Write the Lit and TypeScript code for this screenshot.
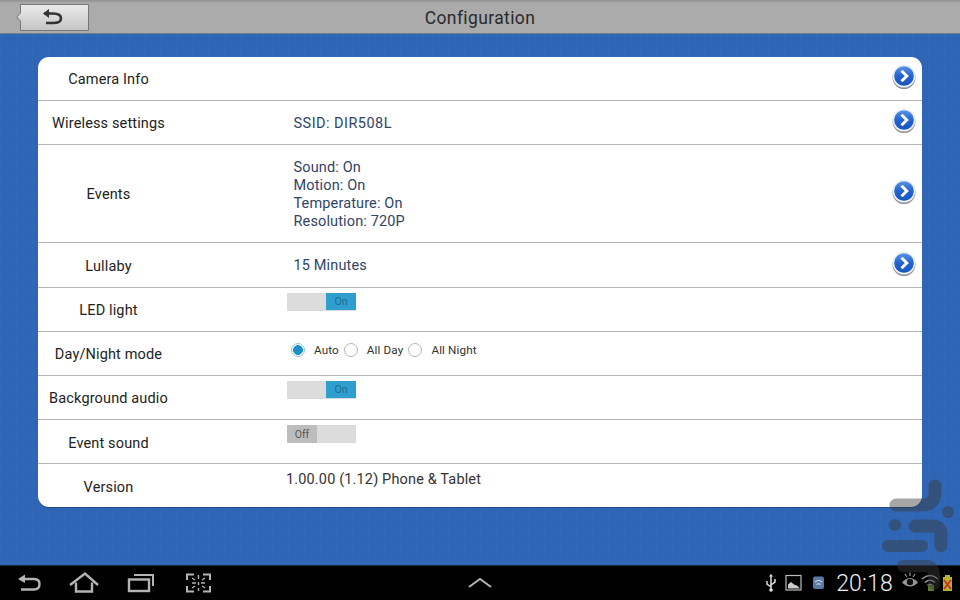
import { LitElement, html, css, svg } from "lit";
import { customElement } from "lit/decorators.js";

const arrow = html`<svg class="go" width="26" height="28" viewBox="0 0 26 28">
  <defs>
    <linearGradient id="gb" x1="0" y1="0" x2="0" y2="1"><stop offset="0" stop-color="#5c93e6"/><stop offset="0.5" stop-color="#2263cf"/><stop offset="1" stop-color="#1a55bd"/></linearGradient>
  </defs>
  <circle cx="13" cy="14.5" r="11.5" fill="#8a8f96"/>
  <circle cx="13" cy="13" r="11.5" fill="#e8eef5"/>
  <circle cx="13" cy="13" r="9.8" fill="url(#gb)"/>
  <path d="M10.5 7.8 L15.8 13 L10.5 18.2" fill="none" stroke="#fff" stroke-width="3"/>
</svg>`;

const toggle = (on: boolean) => html`<div class="toggle ${on ? "on" : "off"}"><span class="knob">${on ? "On" : "Off"}</span></div>`;

const radio = (checked: boolean, label: string) => html`<span class="radio ${checked ? "checked" : ""}"></span><span class="rlabel">${label}</span>`;

@customElement("app-root")
export class AppRoot extends LitElement {
  static styles = css`
    :host { display: block; width: 960px; height: 600px; position: relative; overflow: hidden; font-family: Roboto, "Liberation Sans", sans-serif; color: #222; }
    .page { width: 960px; height: 600px; display: flex; flex-direction: column; }
    .top { height: 34px; flex: none; box-sizing: border-box; padding-top: 2px; position: relative; background: linear-gradient(#8f8f8f 0, #aaaaaa 3px, #acacac 100%); border-bottom: 1px solid #6d7b8c; display: flex; align-items: center; justify-content: center; font-size: 17.5px; letter-spacing: 0.38px; color: #2a2a2a; }
    .back { position: absolute; left: 16px; top: 4px; width: 74px; height: 27px; display: flex; }
    .main { flex: 1; min-height: 0; box-sizing: border-box; padding: 23px 38px 0; background-color: #2f65b5; background-image: linear-gradient(rgba(255,255,255,.018) 1px, transparent 1px), linear-gradient(90deg, rgba(255,255,255,.018) 1px, transparent 1px); background-size: 16px 16px; }
    .card { height: 450px; background: #fff; border-radius: 11px; display: flex; flex-direction: column; overflow: hidden; box-shadow: 0 1px 0 #23497f; }
    .row { display: grid; grid-template-columns: 141px 1fr 44px; box-sizing: border-box; border-bottom: 1px solid #b5b5b5; flex: none; position: relative; font-size: 14.5px; letter-spacing: 0.14px; }
    .row:last-child { border-bottom: none; flex: 1; }
    .label { display: flex; align-items: center; justify-content: center; white-space: nowrap; padding-top: 2px; }
    .label.low { padding-top: 4px; }
    .val { display: flex; flex-direction: column; justify-content: center; padding: 2px 0 0 114.5px; color: #2f4468; line-height: 18px; }
    .ssid { letter-spacing: 0.46px; }
    .end { display: flex; align-items: flex-start; padding-left: 13px; }
    .t6 { padding-top: 6px; }
    .t7 { padding-top: 7px; }
    .t33 { padding-top: 33px; }
    .val.toggles { justify-content: flex-start; padding: 5px 0 0 108px; }
    .toggle { width: 69px; height: 18px; background: #dcdcdc; display: flex; font-size: 10.5px; letter-spacing: 0; }
    .toggle.on { justify-content: flex-end; }
    .knob { height: 17px; padding-top: 1px; box-sizing: border-box; display: flex; align-items: center; justify-content: center; }
    .on .knob { width: 30px; background: #2f9fd0; color: #1e6a8e; }
    .off .knob { width: 30px; background: #bdbdbd; color: #555; height: 18px; padding-top: 2px; }
    .val.radios { flex-direction: row; align-items: center; justify-content: flex-start; padding: 0 0 7px 112px; font-size: 11.7px; letter-spacing: 0.12px; color: #333; }
    .radio { width: 14px; height: 14px; border-radius: 50%; box-sizing: border-box; border: 1px solid #b4b4b4; background: #fff; flex: none; position: relative; }
    .radio.checked { border-color: #8fc6e0; background: radial-gradient(circle, #1b8fc6 0 4.6px, #fff 5.2px); }
    .rlabel { margin: 0 5px 0 9px; white-space: nowrap; }
    .val.ver { justify-content: flex-start; padding: 7px 0 0 107px; color: #333; line-height: 17px; letter-spacing: 0.15px; }
    .nav { height: 35px; flex: none; box-sizing: border-box; background: #000; border-top: 1px solid #1a2940; display: flex; align-items: center; position: relative; }
    .navicons { display: flex; align-items: center; gap: 0; }
    .nav svg { display: block; }
    .spacer { flex: 1; }
    .status { display: flex; align-items: center; height: 100%; }
    .clock { color: #eee; font-size: 23px; letter-spacing: 0.2px; margin: 0 7px 0 2px; font-weight: 300; }
    .up { position: absolute; left: 468px; top: 11px; }
    .wm { position: absolute; right: 0; top: 470px; pointer-events: none; }
  `;

  render() {
    return html`<div class="page">
      <div class="top">
        <div class="back">
          <svg width="74" height="27" viewBox="0 0 74 27">
            <defs><linearGradient id="bk" x1="0" y1="0" x2="0" y2="1"><stop offset="0" stop-color="#ececec"/><stop offset="1" stop-color="#c4c4c4"/></linearGradient></defs>
            <path d="M4.5 .5 H72.5 V26.5 H4.5 V17 L.8 13 L4.5 9 Z" fill="url(#bk)" stroke="#777" stroke-width="1"/>
            <path d="M28 9.5 H37 Q45 9.5 45 14.5 Q45 19 37 19 H30" fill="none" stroke="#333" stroke-width="2.6"/>
            <path d="M33 5 L27 9.5 L33 14 Z" fill="#333"/>
          </svg>
        </div>
        Configuration
      </div>
      <div class="main">
        <div class="card">
          <div class="row" style="height:44px"><div class="label">Camera Info</div><div class="val"></div><div class="end t6">${arrow}</div></div>
          <div class="row" style="height:44px"><div class="label">Wireless settings</div><div class="val"><span class="ssid">SSID: DIR508L</span></div><div class="end t6">${arrow}</div></div>
          <div class="row" style="height:98px"><div class="label">Events</div><div class="val"><span>Sound: On</span><span>Motion: On</span><span>Temperature: On</span><span>Resolution: 720P</span></div><div class="end t33">${arrow}</div></div>
          <div class="row" style="height:45px"><div class="label">Lullaby</div><div class="val">15 Minutes</div><div class="end t7">${arrow}</div></div>
          <div class="row" style="height:44px"><div class="label">LED light</div><div class="val toggles">${toggle(true)}</div></div>
          <div class="row" style="height:44px"><div class="label">Day/Night mode</div><div class="val radios">${radio(true, "Auto")}${radio(false, "All Day")}${radio(false, "All Night")}</div></div>
          <div class="row" style="height:44px"><div class="label">Background audio</div><div class="val toggles">${toggle(true)}</div></div>
          <div class="row" style="height:44px"><div class="label low">Event sound</div><div class="val toggles">${toggle(false)}</div></div>
          <div class="row"><div class="label low">Version</div><div class="val ver">1.00.00 (1.12) Phone &amp; Tablet</div></div>
        </div>
      </div>
      <div class="nav">
        <div class="navicons">
          <svg width="240" height="34" viewBox="0 0 240 34" fill="none" stroke="#b4b4b4">
            <path d="M20 13 H34 Q39.5 13 39.5 18 Q39.5 23.5 34 23.5 H21" stroke-width="2.4"/>
            <path d="M25 8.5 L18 13 L25 17 Z" fill="#b4b4b4" stroke="none"/>
            <path d="M70 19 L85 7.5 L98 19" stroke-width="2.4"/>
            <path d="M76 16.5 V25.5 H92 V16.5" stroke-width="2.4"/>
            <rect x="129" y="13.5" width="20" height="11.5" stroke-width="2.4"/>
            <path d="M134 9 H153 V20" stroke-width="2"/>
            <path d="M187 14 V8.5 H194 M203 8.5 H210 V14 M210 20 V25.5 H203 M194 25.5 H187 V20" stroke-width="2"/>
            <path d="M198.5 9 V13 M198.5 16 V19 M198.5 22 V25 M192 17 H196 M201 17 H205 M192 12 L195 14 M205 12 L202 14 M192 22 L195 20 M205 22 L202 20" stroke-width="1.4"/>
          </svg>
        </div>
        <svg class="up" width="24" height="12" viewBox="0 0 24 12" fill="none" stroke="#b4b4b4" stroke-width="2"><path d="M1 10 L12 2 L23 10"/></svg>
        <div class="spacer"></div>
        <div class="status">
          <svg width="72" height="34" viewBox="0 0 72 34" fill="none">
            <path d="M9 9 V24 M9 21 L5 18 V15 M9 19 L13 16 V13" stroke="#ddd" stroke-width="1.5"/>
            <path d="M7 10.5 L9 8 L11 10.5 Z" fill="#ddd"/>
            <circle cx="9" cy="24" r="1.8" fill="#ddd"/>
            <rect x="24" y="9.5" width="15" height="14.5" stroke="#bbb" stroke-width="1.2"/>
            <path d="M26 22.5 V18.5 L29 16 L32 18.5 L35 19.5 L38 22.5 Z" fill="#ccc"/>
            <rect x="51" y="10.5" width="11" height="12.5" rx="2" fill="#5a7ba3"/>
            <path d="M53 16 Q56.5 13 60 16 M54.5 18.5 Q56.5 17 58.5 18.5" stroke="#d8e2ee" stroke-width="1.2"/>
          </svg>
          <span class="clock">20:18</span>
          <svg width="60" height="34" viewBox="0 0 60 34" fill="none">
            <path d="M2 16.5 Q10 7.5 18 16.5 Q10 24.5 2 16.5 Z" fill="#999"/>
            <circle cx="10" cy="16" r="3.2" fill="#111"/>
            <path d="M5 8 L7 11 M10 6.5 V10 M15 8 L13 11" stroke="#999" stroke-width="1.2"/>
            <path d="M22 13 Q30 6 38 13 M25 16.5 Q30 12 35 16.5 M27.5 19.5 Q30 17 32.5 19.5" stroke="#999" stroke-width="1.6"/>
            <rect x="28" y="19" width="6" height="6" fill="#5d7d2c"/>
            <rect x="43" y="11" width="9" height="14" fill="#b6b62b"/>
            <rect x="45" y="9" width="5" height="2" fill="#b6b62b"/>
            <path d="M44 14 L51 23 M51 14 L44 23" stroke="#c9322d" stroke-width="2"/>
          </svg>
        </div>
      </div>
    </div>
    <svg class="wm" width="90" height="130" viewBox="870 470 90 130" fill="#3a3a3a" fill-opacity="0.45">
      ${svg`
        <path d="M896 505 H922 Q935 505 935 492 V486" fill="none" stroke="#3a3a3a" stroke-opacity="0.45" stroke-width="13" stroke-linecap="round" stroke-linejoin="round"/>
        <circle cx="948" cy="512" r="6"/>
        <circle cx="895" cy="525" r="6"/>
        <path d="M915 526 H932 Q941 526 941 535 V546" fill="none" stroke="#3a3a3a" stroke-opacity="0.45" stroke-width="13" stroke-linecap="round" stroke-linejoin="round"/>
        <path d="M888 546 H922" fill="none" stroke="#3a3a3a" stroke-opacity="0.45" stroke-width="12" stroke-linecap="round"/>
        <path d="M903 566 H926 Q934 566 934 576 V584" fill="none" stroke="#3a3a3a" stroke-opacity="0.45" stroke-width="12" stroke-linecap="round"/>
      `}
    </svg>`;
  }
}
